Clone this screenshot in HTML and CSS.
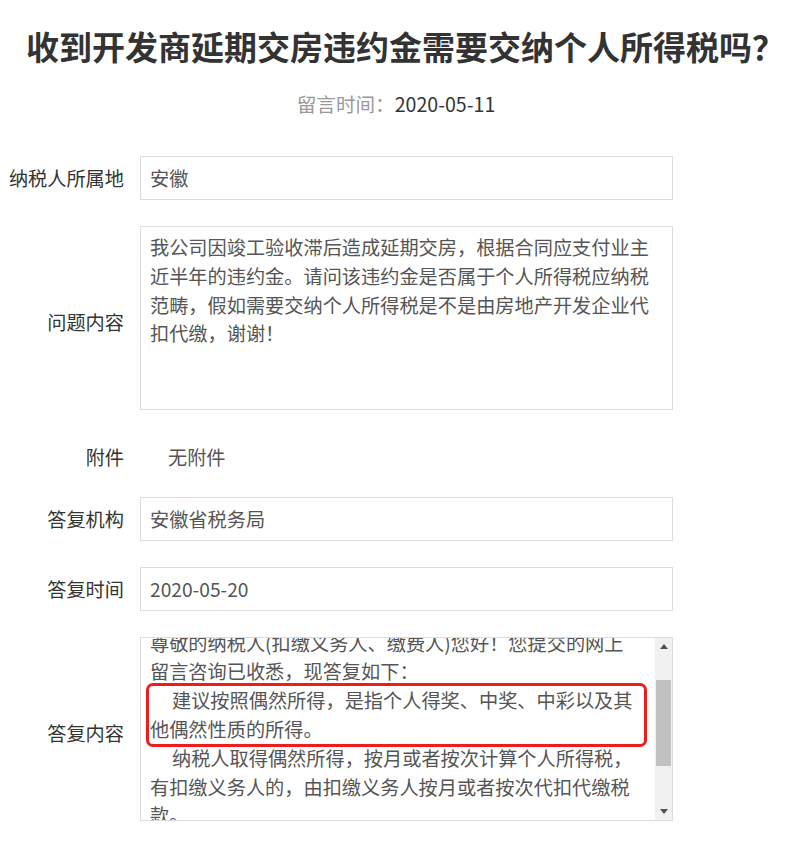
FILE: index.html
```html
<!DOCTYPE html>
<html lang="zh-CN">
<head>
    <meta charset="UTF-8">
    <meta name="viewport" content="width=device-width, initial-scale=1.0">
    <title>留言详情</title>
    <link rel="stylesheet" href="styles.css">
</head>
<body>
    <h1 class="title">收到开发商延期交房违约金需要交纳个人所得税吗？</h1>
    <p class="post-date"><span class="date-label">留言时间：</span>2020-05-11</p>

    <div class="detail">
        <div class="row">
            <div class="label">纳税人所属地</div>
            <div class="field">安徽</div>
        </div>

        <div class="row row-tall">
            <div class="label">问题内容</div>
            <div class="field field-area">我公司因竣工验收滞后造成延期交房，根据合同应支付业主近半年的违约金。请问该违约金是否属于个人所得税应纳税范畴，假如需要交纳个人所得税是不是由房地产开发企业代扣代缴，谢谢！</div>
        </div>

        <div class="row row-plain">
            <div class="label">附件</div>
            <div class="plain-value">无附件</div>
        </div>

        <div class="row">
            <div class="label">答复机构</div>
            <div class="field">安徽省税务局</div>
        </div>

        <div class="row">
            <div class="label">答复时间</div>
            <div class="field">2020-05-20</div>
        </div>

        <div class="row row-tall">
            <div class="label">答复内容</div>
            <div class="field field-area reply-box">
                <div class="reply-view">
                    <div class="reply-text">
                        <p>尊敬的纳税人(扣缴义务人、缴费人)您好！您提交的网上留言咨询已收悉，现答复如下：</p>
                        <p class="indent highlight">建议按照偶然所得，是指个人得奖、中奖、中彩以及其他偶然性质的所得。</p>
                        <p class="indent">纳税人取得偶然所得，按月或者按次计算个人所得税，有扣缴义务人的，由扣缴义务人按月或者按次代扣代缴税款。</p>
                        <p class="indent">纳税人取得应税所得没有扣缴义务人的，应当在取得所得的次月十五日内向税务机关报送纳税申报表，并缴纳税款。</p>
                    </div>
                </div>
                <div class="scrollbar">
                    <div class="sb-btn">
                        <svg width="8" height="5" viewBox="0 0 8 5"><polygon points="4,0 8,5 0,5" fill="#505050"/></svg>
                    </div>
                    <div class="sb-track">
                        <div class="sb-thumb"></div>
                    </div>
                    <div class="sb-btn">
                        <svg width="8" height="5" viewBox="0 0 8 5"><polygon points="0,0 8,0 4,5" fill="#505050"/></svg>
                    </div>
                </div>
            </div>
        </div>
    </div>
</body>
</html>
```

FILE: styles.css
```css
/* Reset */
* {
    margin: 0;
    padding: 0;
    box-sizing: border-box;
}

body {
    margin: 8px;
    font-family: "Noto Sans CJK SC", "Noto Sans", sans-serif;
    font-size: 19.2px;
    color: #333;
    background: #fff;
}

/* Cabeçalho */
.title {
    margin-top: 15px;
    padding-left: 15px;
    font-size: 33px;
    line-height: 46px;
    font-weight: bold;
    text-align: center;
    color: #333;
}

.post-date {
    margin-top: 20px;
    padding-right: 4px;
    line-height: 29px;
    font-size: 19.6px;
    text-align: center;
    color: #333;
}

.date-label {
    color: #999;
}

/* Linhas do formulário */
.detail {
    margin-top: 38px;
}

.row {
    display: flex;
    align-items: center;
    gap: 16px;
    margin-bottom: 26px;
}

.label {
    width: 116px;
    flex-shrink: 0;
    text-align: right;
    white-space: nowrap;
    line-height: 29px;
    color: #333;
}

.row-tall .label {
    padding-top: 8px;
}

.field {
    width: 533px;
    height: 44px;
    padding: 0 9px;
    border: 1px solid #dcdcdc;
    line-height: 42px;
    color: #555;
}

.field-area {
    height: 184px;
    padding: 6px 9px;
    line-height: 28.8px;
}

.row-plain {
    align-items: flex-start;
    height: 35px;
}

.row-plain .label {
    padding-top: 7px;
}

.plain-value {
    padding-top: 7px;
    padding-left: 28px;
    line-height: 29px;
    color: #555;
}

/* Caixa de resposta com rolagem */
.reply-box {
    display: flex;
    padding: 0;
}

.reply-view {
    flex: 1;
    overflow: hidden;
    padding: 0 18px 0 9px;
}

.reply-text {
    margin-top: -9.4px;
}

.indent {
    text-indent: 22px;
}

.highlight {
    margin: 0 -7px 0 -1px;
    padding: 0 7px 0 1px;
    outline: 3px solid #f21b1b;
    border-radius: 4px;
}

.scrollbar {
    width: 17px;
    display: flex;
    flex-direction: column;
    background: #f1f1f1;
}

.sb-btn {
    height: 17px;
    display: flex;
    align-items: center;
    justify-content: center;
}

.sb-track {
    flex: 1;
    padding: 25px 1px 0;
}

.sb-thumb {
    height: 86px;
    background: #c1c1c1;
}
```
